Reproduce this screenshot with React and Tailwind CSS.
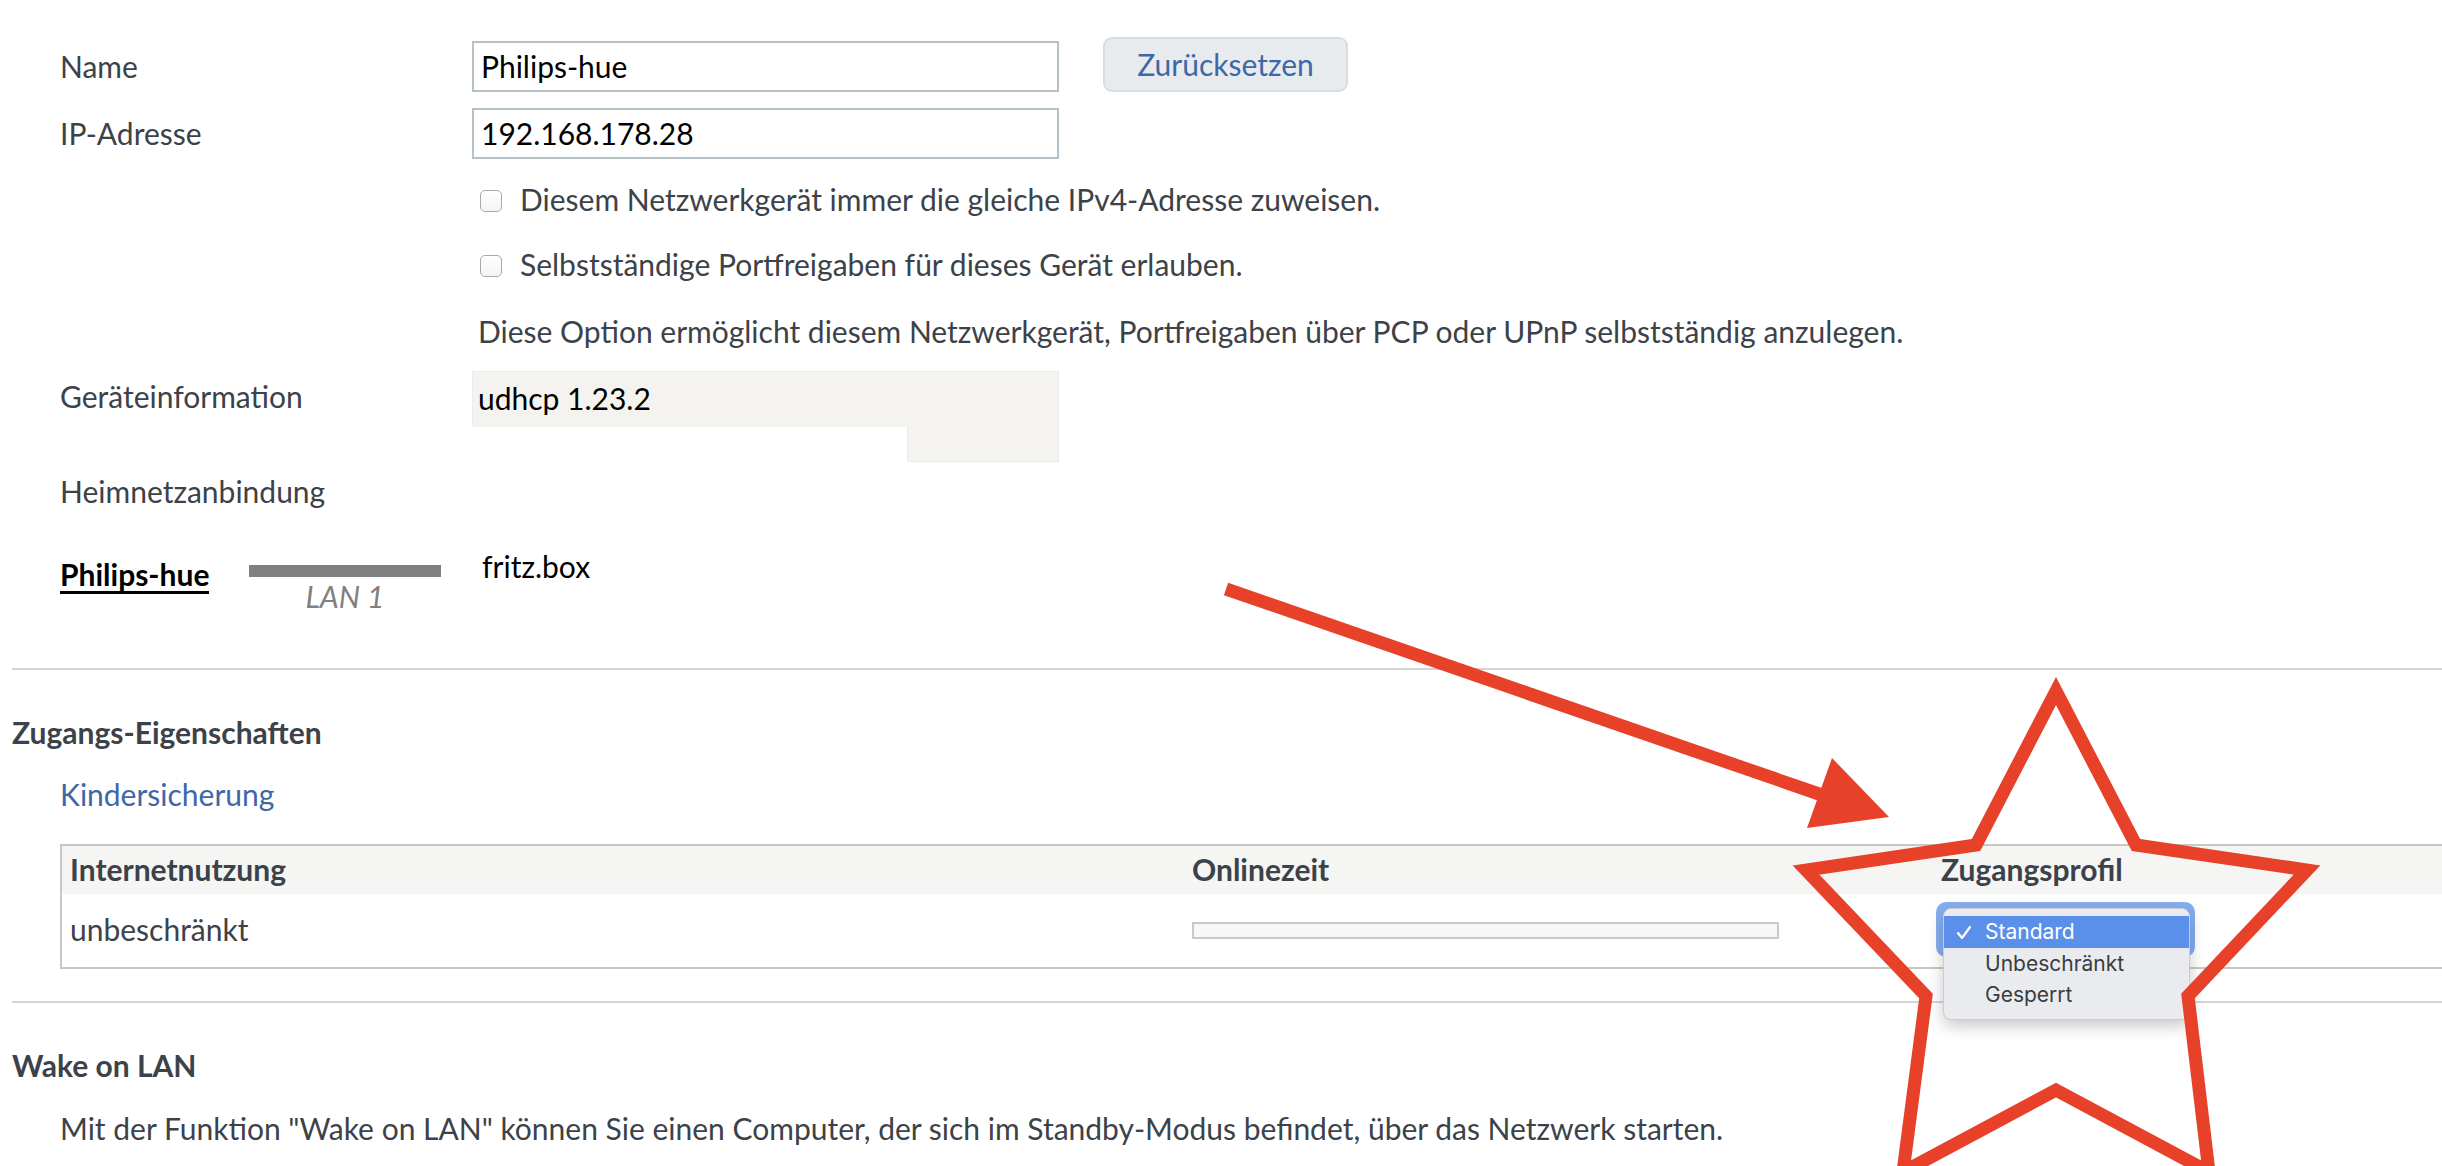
import React from "react";

const Label = ({ children, className = "" }) => (
  <div className={`w-[412px] shrink-0 text-[#3c4249] ${className}`}>{children}</div>
);

const Checkbox = () => (
  <span className="inline-block h-[22px] w-[22px] shrink-0 rounded-[5px] border-[1.5px] border-[#a9a9a9] bg-gradient-to-b from-white to-[#f4f4f4]" />
);

const Divider = ({ className = "" }) => (
  <div className={`ml-[12px] h-[2px] bg-[#d4d4d4] ${className}`} />
);

const Overlay = () => (
  <svg
    className="pointer-events-none absolute left-0 top-0"
    width="2442"
    height="1166"
    viewBox="0 0 2442 1166"
  >
    <line x1="1226" y1="589" x2="1822" y2="795" stroke="#e8412a" strokeWidth="13" />
    <polygon points="1832,758 1889,817 1807,828" fill="#e8412a" />
    <polygon
      points="2056,691 2136,845 2307,870 2188,996 2209,1172 2056,1090 1903,1172 1926,996 1806,870 1976,845"
      fill="none"
      stroke="#e8412a"
      strokeWidth="13"
      strokeLinejoin="miter"
      strokeMiterlimit="10"
    />
  </svg>
);

const ProfileMenu = () => (
  <>
    <div className="absolute left-[1936px] top-[902px] h-[55px] w-[259px] rounded-[10px] bg-[#78a5f0] opacity-90" />
    <div className="absolute left-[1943px] top-[908px] w-[247px] overflow-hidden rounded-[8px] border border-[#c9ccd2] bg-[#e9ebef] pt-[7px] pb-[9px] font-[Inter,'Liberation_Sans',sans-serif] text-[21px] shadow-[0_6px_16px_rgba(0,0,0,0.22)]">
      <div className="flex h-[32px] items-center bg-[#5a8fea] text-white">
        <svg width="41" height="32" viewBox="0 0 41 32" className="shrink-0">
          <polyline points="14,17 18,22 26,11" fill="none" stroke="white" strokeWidth="2.2" strokeLinecap="round" strokeLinejoin="round" />
        </svg>
        <span>Standard</span>
      </div>
      <div className="flex h-[31px] items-center pl-[41px] text-[#3a3d42]">Unbeschränkt</div>
      <div className="flex h-[31px] items-center pl-[41px] text-[#3a3d42]">Gesperrt</div>
    </div>
  </>
);

export default function App() {
  return (
    <div className="relative h-[1166px] w-full overflow-hidden bg-white font-[Lato,'Noto_Sans',sans-serif] text-[30px] text-[#3c4249]">
      <div className="pt-[37px]">
        {/* Name */}
        <div className="flex h-[55px] items-end pl-[60px]">
          <Label className="self-center pt-[3px]">Name</Label>
          <div className="flex h-[51px] w-[587px] items-center border-2 border-[#b5c1c9] px-[7px] text-black">
            Philips-hue
          </div>
          <button className="ml-[44px] h-[55px] w-[245px] rounded-[9px] border-2 border-[#d8dde2] bg-[#e8ebee] text-[#3e67a7]">
            Zurücksetzen
          </button>
        </div>

        {/* IP */}
        <div className="mt-[16px] flex h-[51px] items-center pl-[60px]">
          <Label>IP-Adresse</Label>
          <div className="flex h-[51px] w-[587px] items-center border-2 border-[#b5c1c9] px-[7px] text-black">
            192.168.178.28
          </div>
        </div>

        <div className="mt-[20px] flex h-[44px] items-center pl-[480px]">
          <Checkbox />
          <span className="ml-[18px] pb-[3px]">Diesem Netzwerkgerät immer die gleiche IPv4-Adresse zuweisen.</span>
        </div>
        <div className="mt-[21px] flex h-[44px] items-center pl-[480px]">
          <Checkbox />
          <span className="ml-[18px] pb-[3px]">Selbstständige Portfreigaben für dieses Gerät erlauben.</span>
        </div>
        <div className="mt-[23px] flex h-[44px] items-center pb-[4px] pl-[478px]">
          Diese Option ermöglicht diesem Netzwerkgerät, Portfreigaben über PCP oder UPnP selbstständig anzulegen.
        </div>

        {/* Geräteinformation */}
        <div className="mt-[16px] flex pl-[60px]">
          <Label className="flex h-[54px] items-center pb-[4px]">Geräteinformation</Label>
          <div className="flex w-[587px] flex-col">
            <div className="flex h-[56px] items-center border border-b-0 border-[#ebebea] bg-[#f4f3f0] px-[5px] pb-[2px] text-black">
              udhcp 1.23.2
            </div>
            <div className="flex h-[35px]">
              <div className="w-[435px] bg-white" />
              <div className="flex-1 border border-t-0 border-[#ebebea] bg-[#f4f3f0]" />
            </div>
          </div>
        </div>

        <div className="mt-[10px] flex h-[44px] items-center pb-[6px] pl-[60px]">Heimnetzanbindung</div>

        {/* Heimnetz link */}
        <div className="mt-[36px] flex items-start pl-[60px]">
          <div className="w-[189px] shrink-0">
            <span className="-mt-[3px] inline-block border-b-[3px] border-black font-bold leading-[34px] text-black">
              Philips-hue
            </span>
          </div>
          <div className="flex w-[192px] shrink-0 flex-col items-center pt-[13px]">
            <div className="h-[12px] w-full bg-[#808080]" />
            <div className="mt-[4px] italic leading-[30px] text-[#808080]">LAN 1</div>
          </div>
          <div className="-mt-[3px] ml-[41px] leading-[34px] text-black">fritz.box</div>
        </div>

        <Divider className="mt-[57px]" />

        <div className="mt-[43px] flex h-[44px] items-center pb-[5px] pl-[12px] font-bold">Zugangs-Eigenschaften</div>
        <div className="mt-[16px] flex h-[44px] items-center pb-[2px] pl-[60px] text-[#3e67a7]">Kindersicherung</div>

        {/* Table */}
        <div className="ml-[60px] mt-[27px] border-y-2 border-l-2 border-[#c8c8c1]">
          <div className="grid h-[48px] grid-cols-[1130px_749px_1fr] items-center bg-[#f5f5f3] pb-[2px] font-bold">
            <div className="pl-[8px]">Internetnutzung</div>
            <div>Onlinezeit</div>
            <div>Zugangsprofil</div>
          </div>
          <div className="grid h-[73px] grid-cols-[1130px_749px_1fr] items-center">
            <div className="pb-[3px] pl-[8px]">unbeschränkt</div>
            <div>
              <div className="h-[17px] w-[587px] border-2 border-[#c9c9c9] bg-[#f7f7f7]" />
            </div>
            <div />
          </div>
        </div>

        <Divider className="mt-[32px]" />

        <div className="mt-[43px] flex h-[44px] items-center pb-[6px] pl-[12px] font-bold">Wake on LAN</div>
        <div className="mt-[18px] flex h-[44px] items-center pb-[3px] pl-[60px]">
          Mit der Funktion "Wake on LAN" können Sie einen Computer, der sich im Standby-Modus befindet, über das Netzwerk starten.
        </div>
      </div>

      <ProfileMenu />
      <Overlay />
    </div>
  );
}
